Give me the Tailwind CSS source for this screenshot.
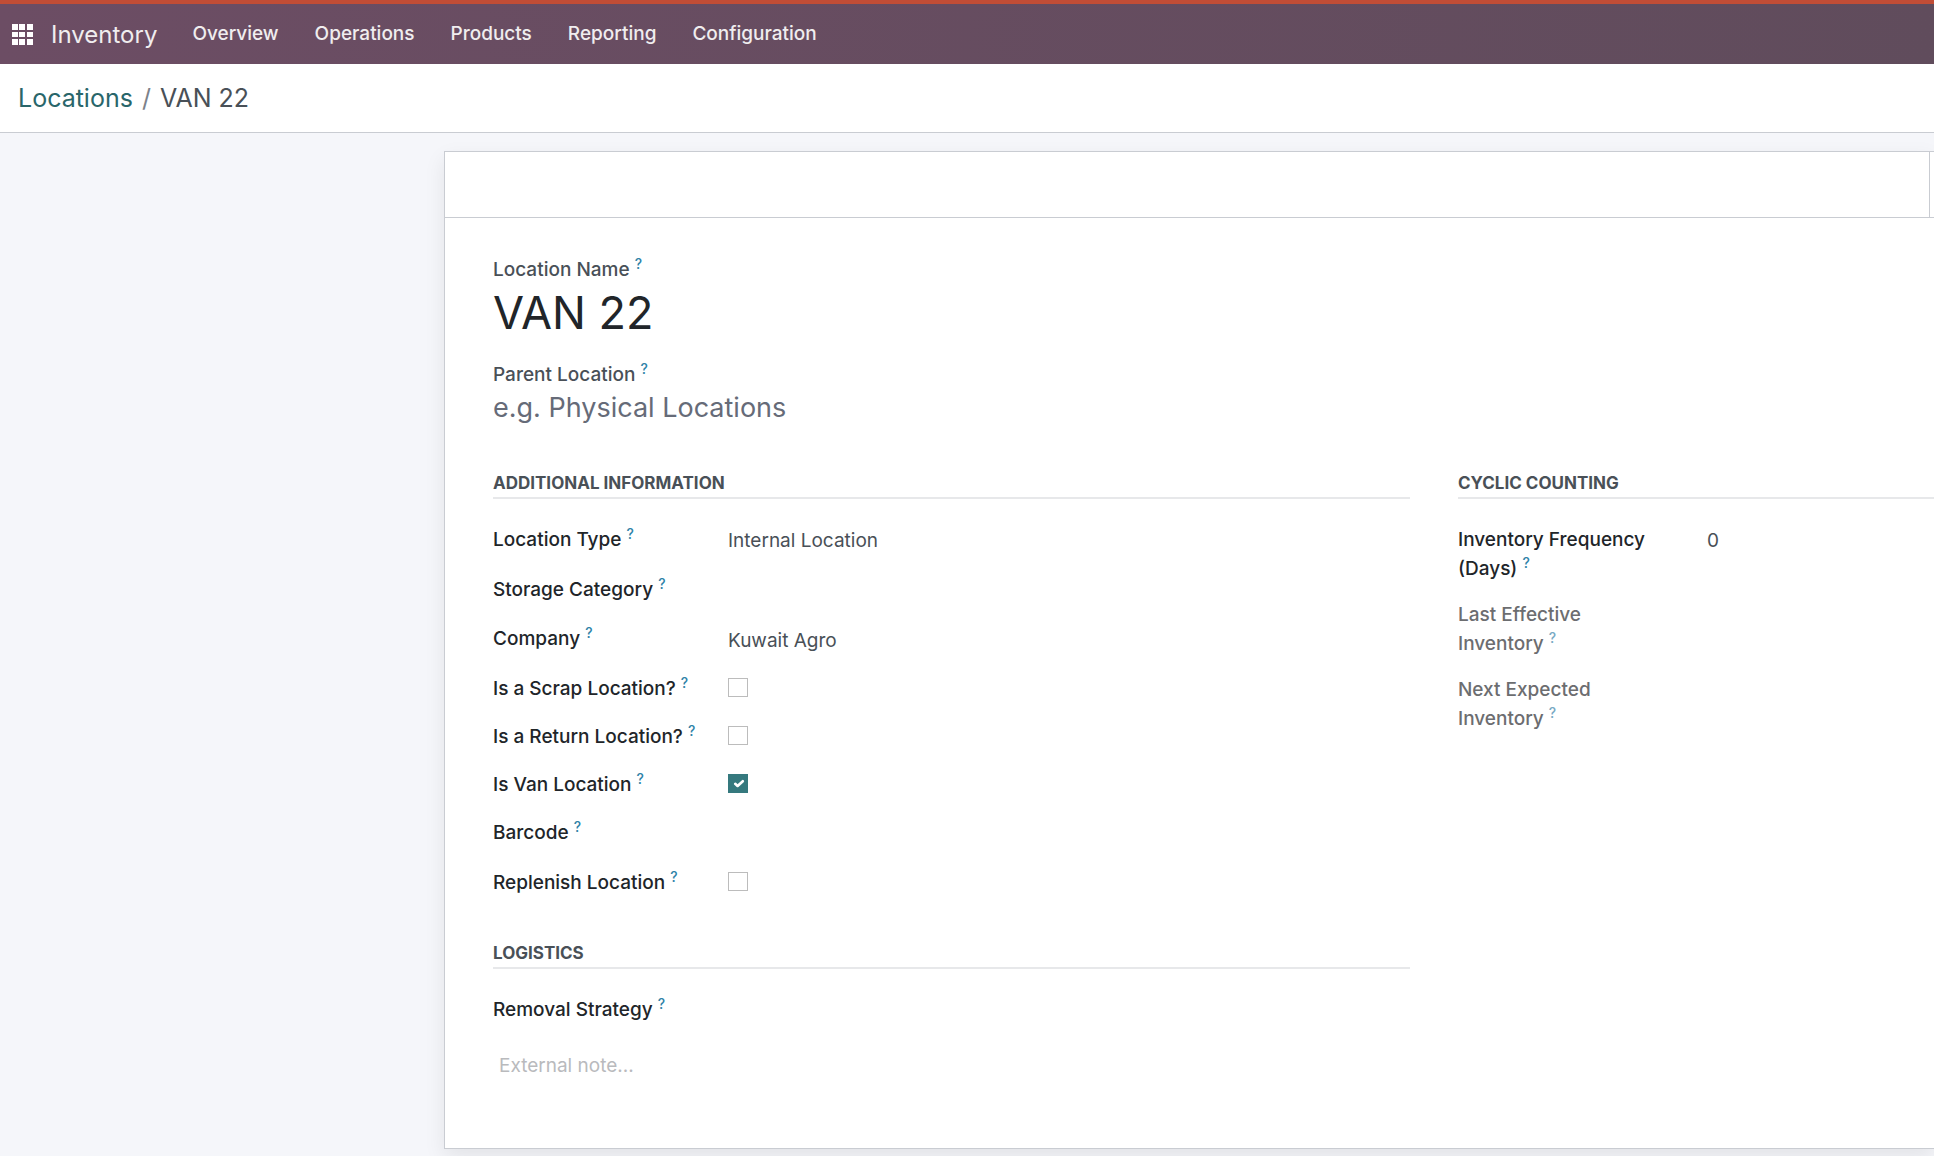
<!DOCTYPE html>
<html lang="en">
<head>
<meta charset="utf-8">
<meta name="viewport" content="width=device-width, initial-scale=1">
<title>VAN 22 - Inventory</title>
<script src="https://cdn.jsdelivr.net/npm/@tailwindcss/browser@4"></script>
</head>
<body class="flex min-h-screen flex-col overflow-x-hidden bg-[#f5f6fa] font-['Inter',sans-serif] text-[19px] text-[#495057]">
<header class="flex h-16 shrink-0 items-center border-t-4 border-[#c14d36] bg-linear-to-r from-[#6c4d64] to-[#604c5c] pt-px pl-3 text-[#f0edef]">
  <button type="button" aria-label="Apps" class="text-white">
    <svg class="size-[21px]" viewBox="0 0 21 21" fill="currentColor"><path d="M0 0h6v6H0zM7 0h6v6H7zM15 0h6v6h-6zM0 8h6v5H0zM7 8h6v5H7zM15 8h6v5h-6zM0 15h6v6H0zM7 15h6v6H7zM15 15h6v6h-6z"/></svg>
  </button>
  <a href="#" class="ml-[18px] text-2xl">Inventory</a>
  <nav class="ml-[35px] flex gap-9 font-medium">
    <a href="#">Overview</a>
    <a href="#">Operations</a>
    <a href="#">Products</a>
    <a href="#">Reporting</a>
    <a href="#">Configuration</a>
  </nav>
</header>

<nav aria-label="Breadcrumb" class="flex h-[69px] shrink-0 items-center gap-[9px] border-b border-[#c9ccd2] bg-white pt-0.5 pl-[18px] text-[25px]">
  <a href="#" class="text-[#29666a]">Locations</a>
  <span class="text-[#7c828a]">/</span>
  <span>VAN 22</span>
</nav>

<main class="flex-1 pt-[18px] pb-2 pl-[444px]">
  <form class="flex h-full min-h-[998px] flex-col border border-r-0 border-[#c9ccd2] bg-white shadow-[0_8px_20px_rgba(0,0,0,0.08)]">
    <div class="flex h-[66px] shrink-0 border-b border-[#c9ccd2] pr-1">
      <div class="flex-1 border-r border-[#c9ccd2]"></div>
    </div>

    <div class="pt-[37px] pl-12">
      <label for="name" class="block h-[29px] leading-[29px] font-medium">Location Name <sup class="-top-[7px] text-sm text-[#2f83a8]">?</sup></label>
      <input id="name" value="VAN 22" class="block h-[57px] w-full text-[45px] text-[#212529]">
      <label for="parent" class="mt-[19px] block h-[29px] leading-[29px] font-medium">Parent Location <sup class="-top-[7px] text-sm text-[#2f83a8]">?</sup></label>
      <input id="parent" placeholder="e.g. Physical Locations" class="block h-[38px] w-full text-[27px] placeholder:text-[#666b78]">

      <div class="mt-[42px] grid grid-cols-[917fr_476fr] gap-x-12">
        <section>
          <h2 class="h-[30px] border-b-2 border-[#e7e8ea] text-[17px] leading-7 font-bold">ADDITIONAL INFORMATION</h2>
          <div class="mt-[26px] grid grid-cols-[235px_1fr] leading-[29px] font-medium text-[#212529]">
            <label for="type" class="h-[50px]">Location Type <sup class="-top-[7px] text-sm text-[#2f83a8]">?</sup></label>
            <select id="type" class="h-[30px] appearance-none font-normal text-[#495057]"><option>Internal Location</option></select>
            <label for="storage" class="h-[49px]">Storage Category <sup class="-top-[7px] text-sm text-[#2f83a8]">?</sup></label>
            <input id="storage" class="h-[30px] font-normal text-[#495057]">
            <label for="company" class="h-[50px]">Company <sup class="-top-[7px] text-sm text-[#2f83a8]">?</sup></label>
            <input id="company" value="Kuwait Agro" class="h-8 font-normal text-[#495057]">
            <label for="scrap" class="h-12">Is a Scrap Location? <sup class="-top-[7px] text-sm text-[#2f83a8]">?</sup></label>
            <div class="pt-1"><input id="scrap" type="checkbox" class="block h-[19px] w-5 appearance-none border border-[#bcbcbc]"></div>
            <label for="return" class="h-12">Is a Return Location? <sup class="-top-[7px] text-sm text-[#2f83a8]">?</sup></label>
            <div class="pt-1"><input id="return" type="checkbox" class="block h-[19px] w-5 appearance-none border border-[#bcbcbc]"></div>
            <label for="van" class="h-12">Is Van Location <sup class="-top-[7px] text-sm text-[#2f83a8]">?</sup></label>
            <div class="grid h-8 w-5 content-start pt-1">
              <input id="van" type="checkbox" checked class="col-start-1 row-start-1 h-[19px] w-5 appearance-none bg-[#35797e]">
              <svg class="pointer-events-none col-start-1 row-start-1 h-[19px] w-5" viewBox="0 0 20 19" fill="none" stroke="#fff" stroke-width="2.6" stroke-linecap="round" stroke-linejoin="round"><path d="M7.2 9.8l2.4 2.2L14.8 7.2"/></svg>
            </div>
            <label for="barcode" class="h-[50px]">Barcode <sup class="-top-[7px] text-sm text-[#2f83a8]">?</sup></label>
            <input id="barcode" class="h-[30px] font-normal text-[#495057]">
            <label for="replenish" class="h-12">Replenish Location <sup class="-top-[7px] text-sm text-[#2f83a8]">?</sup></label>
            <div class="pt-1"><input id="replenish" type="checkbox" class="block h-[19px] w-5 appearance-none border border-[#bcbcbc]"></div>
          </div>
        </section>

        <section>
          <h2 class="h-[30px] border-b-2 border-[#e7e8ea] text-[17px] leading-7 font-bold">CYCLIC COUNTING</h2>
          <div class="mt-[26px] grid grid-cols-[201px_1fr] gap-x-12 gap-y-[17px] leading-[29px] font-medium text-[#212529]">
            <label for="frequency">Inventory Frequency (Days) <sup class="-top-[7px] text-sm text-[#2f83a8]">?</sup></label>
            <input id="frequency" value="0" class="h-[30px] w-full font-normal text-[#495057]">
            <label for="last" class="text-[#6c6d70]">Last Effective<br>Inventory <sup class="-top-[7px] text-sm text-[#78aac4]">?</sup></label>
            <output id="last"></output>
            <label for="next" class="text-[#6c6d70]">Next Expected<br>Inventory <sup class="-top-[7px] text-sm text-[#78aac4]">?</sup></label>
            <output id="next"></output>
          </div>
        </section>

        <section class="mt-[23px]">
          <h2 class="h-[30px] border-b-2 border-[#e7e8ea] text-[17px] leading-7 font-bold">LOGISTICS</h2>
          <div class="mt-[26px] grid grid-cols-[235px_1fr] leading-[29px] font-medium text-[#212529]">
            <label for="removal">Removal Strategy <sup class="-top-[7px] text-sm text-[#2f83a8]">?</sup></label>
            <input id="removal" class="h-8 font-normal text-[#495057]">
          </div>
        </section>
      </div>

      <textarea aria-label="External note" rows="1" placeholder="External note..." class="mt-6 block w-full resize-none pl-1.5 leading-[29px] placeholder:text-[#b9babd]"></textarea>
    </div>
  </form>
</main>
</body>
</html>
